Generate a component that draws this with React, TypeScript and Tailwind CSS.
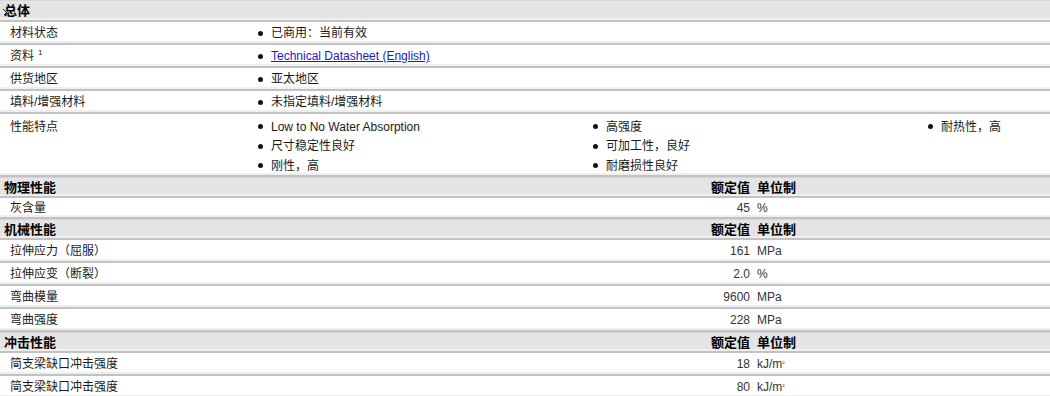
import React from "react";

const font = "font-['Liberation_Sans','Noto_Sans_CJK_SC',sans-serif]";
const rowLine = "border-b-2 border-[#c2c2c2] shadow-[inset_0_-2px_0_#efefef]";

function Bullet({ children }: { children: React.ReactNode }) {
  return (
    <div className="flex h-[19.5px] items-center">
      <span className="mr-[8px] size-[5px] shrink-0 rounded-full bg-[#111]" />
      <span>{children}</span>
    </div>
  );
}

function SectionHeader({ title, cols, first }: { title: string; cols?: boolean; first?: boolean }) {
  return (
    <div
      className={`flex ${first ? "h-[22px]" : "h-[21px]"} items-center border-t border-t-[#d6d6d6] bg-[#e4e4e4] pt-px ${rowLine} text-[13px] font-bold text-black`}
    >
      <div className="relative w-[500px] pl-[4px]">
        {first && (
          <svg className="absolute left-[2px] top-[7px]" width="8" height="8" viewBox="0 0 8 8" aria-hidden="true">
            <path d="M1 1 L5 5 M5 5 L2 7 M5 5 L7 7" stroke="#222" strokeWidth="1" fill="none" />
          </svg>
        )}
        {title}
      </div>
      {cols && (
        <>
          <div className="w-[250px] text-right">额定值</div>
          <div className="ml-[7px]">单位制</div>
        </>
      )}
    </div>
  );
}

function InfoRow({ label, children, sup }: { label: string; children: React.ReactNode; sup?: string }) {
  return (
    <div className={`flex h-[23px] items-center pt-px ${rowLine}`}>
      <div className="w-[250px] pl-[10px]">
        {label}
        {sup && <sup className="relative -top-[5px] ml-[4px] text-[8px]">{sup}</sup>}
      </div>
      <div className="pl-[8px]">{children}</div>
    </div>
  );
}

function PropRow({ label, value, unit, short }: { label: string; value: string; unit: React.ReactNode; short?: boolean }) {
  return (
    <div className={`flex ${short ? "h-[21px]" : "h-[23px]"} items-center pt-px ${rowLine}`}>
      <div className="w-[500px] pl-[10px]">{label}</div>
      <div className="w-[250px] text-right text-[#333]">{value}</div>
      <div className="ml-[7px] text-[#333]">{unit}</div>
    </div>
  );
}

const kjm2 = (
  <>
    kJ/m<sup className="text-[7px]">²</sup>
  </>
);

export default function App() {
  return (
    <div className={`h-[396px] w-[1050px] overflow-hidden bg-white text-[12px] text-[#1a1a1a] ${font}`}>
      <SectionHeader title="总体" first />
      <InfoRow label="材料状态">
        <Bullet>已商用：当前有效</Bullet>
      </InfoRow>
      <InfoRow label="资料" sup="1">
        <Bullet>
          <a href="#" className="text-[#1c1cc4] underline">
            Technical Datasheet (English)
          </a>
        </Bullet>
      </InfoRow>
      <InfoRow label="供货地区">
        <Bullet>亚太地区</Bullet>
      </InfoRow>
      <InfoRow label="填料/增强材料">
        <Bullet>未指定填料/增强材料</Bullet>
      </InfoRow>
      <div className={`flex h-[63px] ${rowLine}`}>
        <div className="w-[250px] pt-[3px] pl-[10px]">
          <div className="flex h-[19.5px] items-center">性能特点</div>
        </div>
        <div className="grid flex-1 grid-cols-[335px_335px_1fr] pt-[3px] pl-[8px]">
          <div>
            <Bullet>Low to No Water Absorption</Bullet>
            <Bullet>尺寸稳定性良好</Bullet>
            <Bullet>刚性，高</Bullet>
          </div>
          <div>
            <Bullet>高强度</Bullet>
            <Bullet>可加工性，良好</Bullet>
            <Bullet>耐磨损性良好</Bullet>
          </div>
          <div>
            <Bullet>耐热性，高</Bullet>
          </div>
        </div>
      </div>

      <SectionHeader title="物理性能" cols />
      <PropRow label="灰含量" value="45" unit="%" short />

      <SectionHeader title="机械性能" cols />
      <PropRow label="拉伸应力（屈服）" value="161" unit="MPa" />
      <PropRow label="拉伸应变（断裂）" value="2.0" unit="%" />
      <PropRow label="弯曲模量" value="9600" unit="MPa" />
      <PropRow label="弯曲强度" value="228" unit="MPa" />

      <SectionHeader title="冲击性能" cols />
      <PropRow label="简支梁缺口冲击强度" value="18" unit={kjm2} />
      <PropRow label="简支梁缺口冲击强度" value="80" unit={kjm2} />
    </div>
  );
}
